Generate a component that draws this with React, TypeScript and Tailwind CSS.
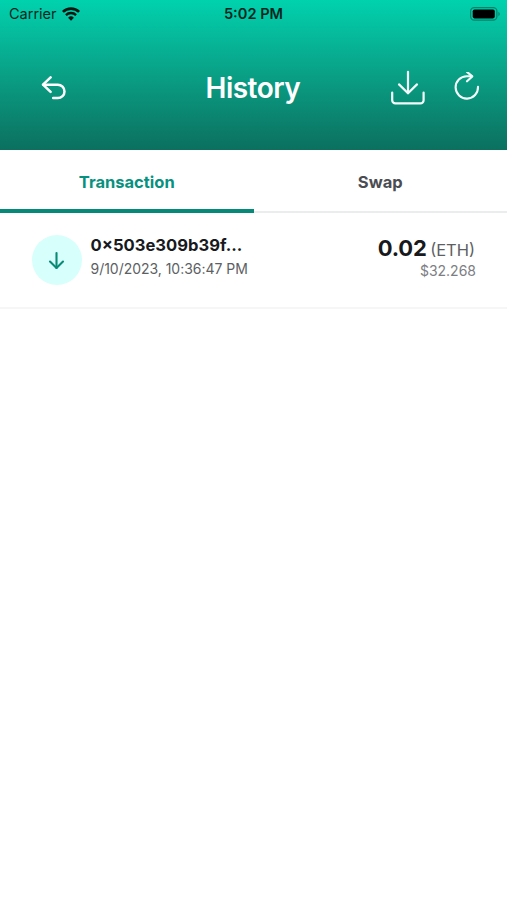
import React, { useState } from "react";

const tabs = ["Transaction", "Swap"];

const transactions = [
  {
    hash: "0×503e309b39f...",
    date: "9/10/2023, 10:36:47 PM",
    amount: "0.02",
    symbol: "(ETH)",
    fiat: "$32.268",
  },
];

const WifiIcon = () => (
  <svg width="18" height="14" viewBox="0 0 18 14" fill="none" stroke="#03150f">
    <path d="M0.9 4.9a11.6 11.6 0 0 1 16.2 0" strokeWidth="2.6" />
    <path d="M3.9 8.1a7.3 7.3 0 0 1 10.2 0" strokeWidth="2.3" />
    <path d="M9 13.8 6.1 10.7a4.2 4.2 0 0 1 5.8 0Z" fill="#03150f" stroke="none" />
  </svg>
);

const BatteryIcon = () => (
  <svg width="31" height="14" viewBox="0 0 31 14">
    <rect x="0.6" y="0.6" width="26.3" height="12.6" rx="3.6" fill="none" stroke="#00846a" strokeWidth="1.2" />
    <rect x="2.7" y="2.5" width="22.1" height="8.9" rx="1.8" fill="#000" />
    <path d="M28.4 4.8v4.4c1.9-.8 1.9-3.6 0-4.4Z" fill="#00846a" />
  </svg>
);

const BackIcon = () => (
  <svg width="26" height="24" viewBox="0 0 26 24" fill="none" stroke="#fff" strokeWidth="2.5" strokeLinecap="round" strokeLinejoin="round">
    <path d="M10.6 1.4 3 8.6l7.6 7.2" />
    <path d="M3.4 8.7h14.4a6.7 6.7 0 0 1 0 13.4h-4.6" />
  </svg>
);

const DownloadIcon = () => (
  <svg width="36" height="36" viewBox="0 0 36 36" fill="none" stroke="#f4fffc" strokeWidth="2.2" strokeLinecap="round" strokeLinejoin="round">
    <path d="M18 1.8v21.4" />
    <path d="m9 14.4 9 8.8 9-8.8" />
    <path d="M2.2 22.6v7.6a3.2 3.2 0 0 0 3.2 3.2h25a3.2 3.2 0 0 0 3.2-3.2v-7.6" />
  </svg>
);

const RefreshIcon = () => (
  <svg width="28" height="32" viewBox="0 0 28 32" fill="none" stroke="#f4fffc" strokeWidth="2.1" strokeLinecap="round" strokeLinejoin="round">
    <path d="M25 14.9A11.2 11.2 0 1 1 13.8 4.2h5" />
    <path d="m14 -0.1 5.3 4.5-5.3 4.9" />
  </svg>
);

const ArrowDownIcon = () => (
  <svg width="18" height="20" viewBox="0 0 18 20" fill="none" stroke="#078b75" strokeWidth="2.1" strokeLinecap="round" strokeLinejoin="round">
    <path d="M8.5 3v15" />
    <path d="m2 11.6 6.5 6.4 6.5-6.4" />
  </svg>
);

const App = () => {
  const [activeTab, setActiveTab] = useState("Transaction");

  return (
    <div className="h-[900px] w-[507px] overflow-hidden bg-white font-['Inter',sans-serif]">
      <header className="h-[150px] bg-linear-to-b from-[#00d2ae] to-[#0b705f]">
        {/* Status bar */}
        <div className="grid h-7 grid-cols-3 items-center pl-[9px] pr-[6px] text-[#03271e]">
          <div className="flex items-center gap-[5px]">
            <span className="text-[14.5px] leading-5">Carrier</span>
            <WifiIcon />
          </div>
          <span className="pr-[3px] text-center text-[14.6px] font-semibold leading-5">
            5:02 PM
          </span>
          <div className="flex justify-end">
            <BatteryIcon />
          </div>
        </div>

        <div className="flex h-[120px] items-center pl-10 pr-[26px]">
          <button className="w-[140px]" aria-label="Back">
            <BackIcon />
          </button>
          <h1 className="flex-1 pl-[25.5px] text-[28px] font-semibold leading-9 tracking-[-0.5px] text-white">
            History
          </h1>
          <div className="flex items-center gap-[27px]">
            <button aria-label="Download">
              <DownloadIcon />
            </button>
            <button aria-label="Refresh">
              <RefreshIcon />
            </button>
          </div>
        </div>
      </header>

      <nav className="flex h-[63px]">
        {tabs.map((tab) => (
          <button
            key={tab}
            onClick={() => setActiveTab(tab)}
            className={`flex-1 text-[16.5px] font-bold ${
              activeTab === tab
                ? "border-b-4 border-[#07897a] pt-[6px] text-[#07917e]"
                : "border-b-2 border-[#ebecee] pt-[4px] text-[#4b4d52]"
            }`}
          >
            {tab}
          </button>
        ))}
      </nav>

      <ul>
        {transactions.map((tx) => (
          <li
            key={tx.hash}
            className="flex h-[96px] items-start border-b-2 border-[#f6f6f7] pl-8 pr-[31px] pt-[22px]"
          >
            <div className="flex h-[50px] w-[50px] items-center justify-center rounded-full bg-[#d7fffb]">
              <ArrowDownIcon />
            </div>
            <div className="flex-1 pl-[8.5px]">
              <p className="text-[16.6px] font-bold leading-5 text-[#17191d]">
                {tx.hash}
              </p>
              <p className="mt-1 text-[14px] leading-5 tracking-[-0.03px] text-[#5d5f64]">
                {tx.date}
              </p>
            </div>
            <div className="text-right">
              <p className="-mt-px flex items-baseline justify-end gap-[3.5px] pr-px leading-7">
                <span className="text-[22px] font-bold tracking-[-0.2px] text-[#17191d]">
                  {tx.amount}
                </span>
                <span className="text-[16.5px] text-[#5d5f64]">
                  {tx.symbol}
                </span>
              </p>
              <p className="-mt-px text-[14px] leading-4 text-[#7c7e83]">
                {tx.fiat}
              </p>
            </div>
          </li>
        ))}
      </ul>
    </div>
  );
};

export default App;
